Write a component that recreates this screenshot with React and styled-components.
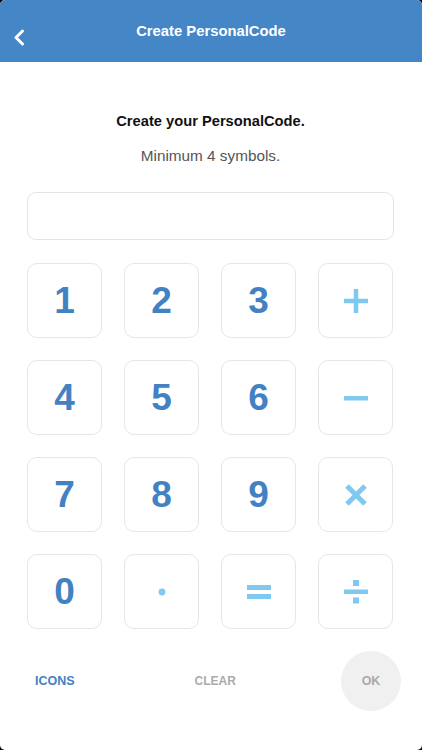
import React from "react";
import styled, { createGlobalStyle } from "styled-components";

const Global = createGlobalStyle`
  html, body { margin: 0; padding: 0; background: #000; }
  body { font-family: "Liberation Sans", Arial, sans-serif; }
  * { box-sizing: border-box; }
`;

const Screen = styled.div`
  width: 422px;
  height: 750px;
  background: #fff;
  border-radius: 5px;
  overflow: hidden;
  display: flex;
  flex-direction: column;
`;

const Header = styled.header`
  height: 62px;
  background: #4586c6;
  display: grid;
  grid-template-columns: 60px 1fr 60px;
  align-items: center;
`;

const BackButton = styled.div`
  display: flex;
  align-items: center;
  padding-left: 13px;
  padding-top: 12px;
`;

const Title = styled.h1`
  margin: 0;
  text-align: center;
  color: #fff;
  font-size: 14.8px;
  font-weight: 700;
  line-height: 18px;
`;

const Body = styled.main`
  display: flex;
  flex-direction: column;
  align-items: center;
  padding: 50px 28px 0 27px;
`;

const Heading = styled.div`
  font-size: 14.7px;
  font-weight: 700;
  color: #111;
  line-height: 18px;
`;

const Sub = styled.div`
  margin-top: 17px;
  font-size: 15.3px;
  color: #555;
  line-height: 18px;
`;

const Input = styled.div`
  margin-top: 27px;
  width: 367px;
  height: 48px;
  border: 1px solid #e4e4e4;
  border-radius: 9px;
`;

const Pad = styled.div`
  align-self: flex-start;
  margin-top: 23px;
  display: grid;
  grid-template-columns: repeat(4, 75px);
  grid-auto-rows: 75px;
  gap: 22px;
`;

const Key = styled.div`
  border: 1px solid #e6e6e6;
  border-radius: 10px;
  display: flex;
  align-items: center;
  justify-content: center;
  color: ${(p) => (p.$op ? "#7fc9f1" : "#4282c2")};
  font-size: 37px;
  font-weight: 700;
  line-height: 1;
`;

const Footer = styled.div`
  margin-top: 22px;
  display: flex;
  align-items: center;
  padding: 0 21px 0 35px;
`;

const TextButton = styled.div`
  font-size: ${(p) => p.$size || 12.5}px;
  font-weight: 700;
  color: ${(p) => p.$color};
  margin-left: ${(p) => p.$ml || 0}px;
`;

const OkButton = styled.div`
  margin-left: auto;
  width: 60px;
  height: 60px;
  border-radius: 50%;
  background: #f0f0f0;
  color: #a9a9a9;
  font-size: 12.5px;
  font-weight: 700;
  display: flex;
  align-items: center;
  justify-content: center;
`;

const C = "#7fc9f1";

const Plus = () => (
  <svg width="24" height="24" viewBox="0 0 24 24">
    <rect x="0" y="9.75" width="24" height="4.5" fill={C} />
    <rect x="9.75" y="0" width="4.5" height="24" fill={C} />
  </svg>
);
const Minus = () => (
  <svg width="24" height="24" viewBox="0 0 24 24">
    <rect x="0" y="10" width="24" height="4.5" fill={C} />
  </svg>
);
const Times = () => (
  <svg width="24" height="24" viewBox="0 0 24 24">
    <path d="M3 3 L21 21 M21 3 L3 21" stroke={C} strokeWidth="5" />
  </svg>
);
const Dot = () => (
  <svg width="8" height="8" viewBox="0 0 8 8">
    <circle cx="4" cy="4" r="3.4" fill={C} />
  </svg>
);
const Equals = () => (
  <svg width="24" height="24" viewBox="0 0 24 24">
    <rect x="0" y="5" width="24" height="5" fill={C} />
    <rect x="0" y="14" width="24" height="5" fill={C} />
  </svg>
);
const Divide = () => (
  <svg width="24" height="24" viewBox="0 0 24 24">
    <rect x="9" y="0" width="6" height="6" fill={C} />
    <rect x="0" y="9.5" width="24" height="4.5" fill={C} />
    <rect x="9" y="17.5" width="6" height="6" fill={C} />
  </svg>
);

const keys = [
  ["1"], ["2"], ["3"], [<Plus />, true],
  ["4"], ["5"], ["6"], [<Minus />, true],
  ["7"], ["8"], ["9"], [<Times />, true],
  ["0"], [<Dot />, true], [<Equals />, true], [<Divide />, true],
];

export default function App() {
  return (
    <>
      <Global />
      <Screen>
        <Header>
          <BackButton>
            <svg width="12" height="17" viewBox="0 0 12 17">
              <path d="M9.5 2 L3 8.5 L9.5 15" stroke="#fff" strokeWidth="3" fill="none" strokeLinecap="round" strokeLinejoin="round" />
            </svg>
          </BackButton>
          <Title>Create PersonalCode</Title>
          <div />
        </Header>
        <Body>
          <Heading>Create your PersonalCode.</Heading>
          <Sub>Minimum 4 symbols.</Sub>
          <Input />
          <Pad>
            {keys.map(([k, op], i) => (
              <Key key={i} $op={op}>{k}</Key>
            ))}
          </Pad>
        </Body>
        <Footer>
          <TextButton $color="#4282c2">ICONS</TextButton>
          <TextButton $color="#ababab" $size={12} $ml={120}>CLEAR</TextButton>
          <OkButton>OK</OkButton>
        </Footer>
      </Screen>
    </>
  );
}
